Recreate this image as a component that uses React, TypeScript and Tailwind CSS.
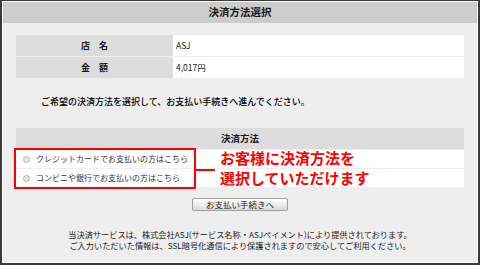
const jp = 'font-["Noto_Sans_CJK_JP","Noto_Sans",sans-serif]'

const options = [
  'クレジットカードでお支払いの方はこちら',
  'コンビニや銀行でお支払いの方はこちら',
]

export default function App() {
  return (
    <div className={`w-[480px] h-[265px] bg-[#3a3a3a] pt-px px-[2px] pb-[2px] text-[#1a1a1a] ${jp}`}>
      <div className="h-full bg-[#eeeeee] border border-white flex flex-col">
        <div className="h-[21px] bg-[#cccccc] flex items-center justify-center text-[10.5px] font-bold leading-none">
          決済方法選択
        </div>

        <div className="mx-[13px] mt-[12px] flex flex-col gap-px">
          <div className="flex h-[21px]">
            <div className="w-[157px] bg-[#dddddd] flex items-center justify-center text-[9px] font-bold">
              店　名
            </div>
            <div className="flex-1 bg-white flex items-center pl-[3px] text-[8.5px]">ASJ</div>
          </div>
          <div className="flex h-[21px]">
            <div className="w-[157px] bg-[#dddddd] flex items-center justify-center text-[9px] font-bold">
              金　額
            </div>
            <div className="flex-1 bg-white flex items-center pl-[3px] text-[8.5px]">4,017円</div>
          </div>
        </div>

        <p className="mx-[13px] mt-[18px] pl-[25px] h-[12px] leading-[12px] text-[9px] font-medium text-black">
          ご希望の決済方法を選択して、お支払い手続きへ進んでください。
        </p>

        <div className="mx-[13px] mt-[20px] flex flex-col gap-px">
          <div className="h-[21px] bg-[#dddddd] flex items-center justify-center text-[9.5px] font-bold">
            決済方法
          </div>
          <div className="relative flex flex-col gap-px">
            {options.map((o) => (
              <label key={o} className="h-[18px] bg-white flex items-center pl-[7px] gap-[6px] text-[8px] text-[#333]">
                <span className="w-[7px] h-[7px] rounded-full border border-[#b4b4b4] bg-[#e6e6e6]" />
                {o}
              </label>
            ))}
            <div className="absolute left-[-2px] top-[-2px] w-[182px] h-[41px] border-2 border-[#ff0000]" />
            <div className="absolute left-[180px] top-[19px] w-[19px] h-[2px] bg-[#ff0000]" />
            <div className="absolute left-[204px] top-[-2px] text-[15px] leading-[20px] font-bold text-[#ff0000]">
              お客様に決済方法を
              <br />
              選択していただけます
            </div>
          </div>
        </div>

        <div className="mt-[11px] flex justify-center">
          <button className="w-[96px] h-[13px] rounded-[2px] border border-[#a0a0a0] bg-gradient-to-b from-white to-[#dcdcdc] text-[8.5px] leading-none text-[#222]">
            お支払い手続きへ
          </button>
        </div>

        <div className="mt-[18px] text-center text-[8.2px] leading-[11px] text-[#222]">
          <p>当決済サービスは、株式会社ASJ(サービス名称・ASJペイメント)により提供されております。</p>
          <p>ご入力いただいた情報は、SSL暗号化通信により保護されますので安心してご利用ください。</p>
        </div>
      </div>
    </div>
  )
}
